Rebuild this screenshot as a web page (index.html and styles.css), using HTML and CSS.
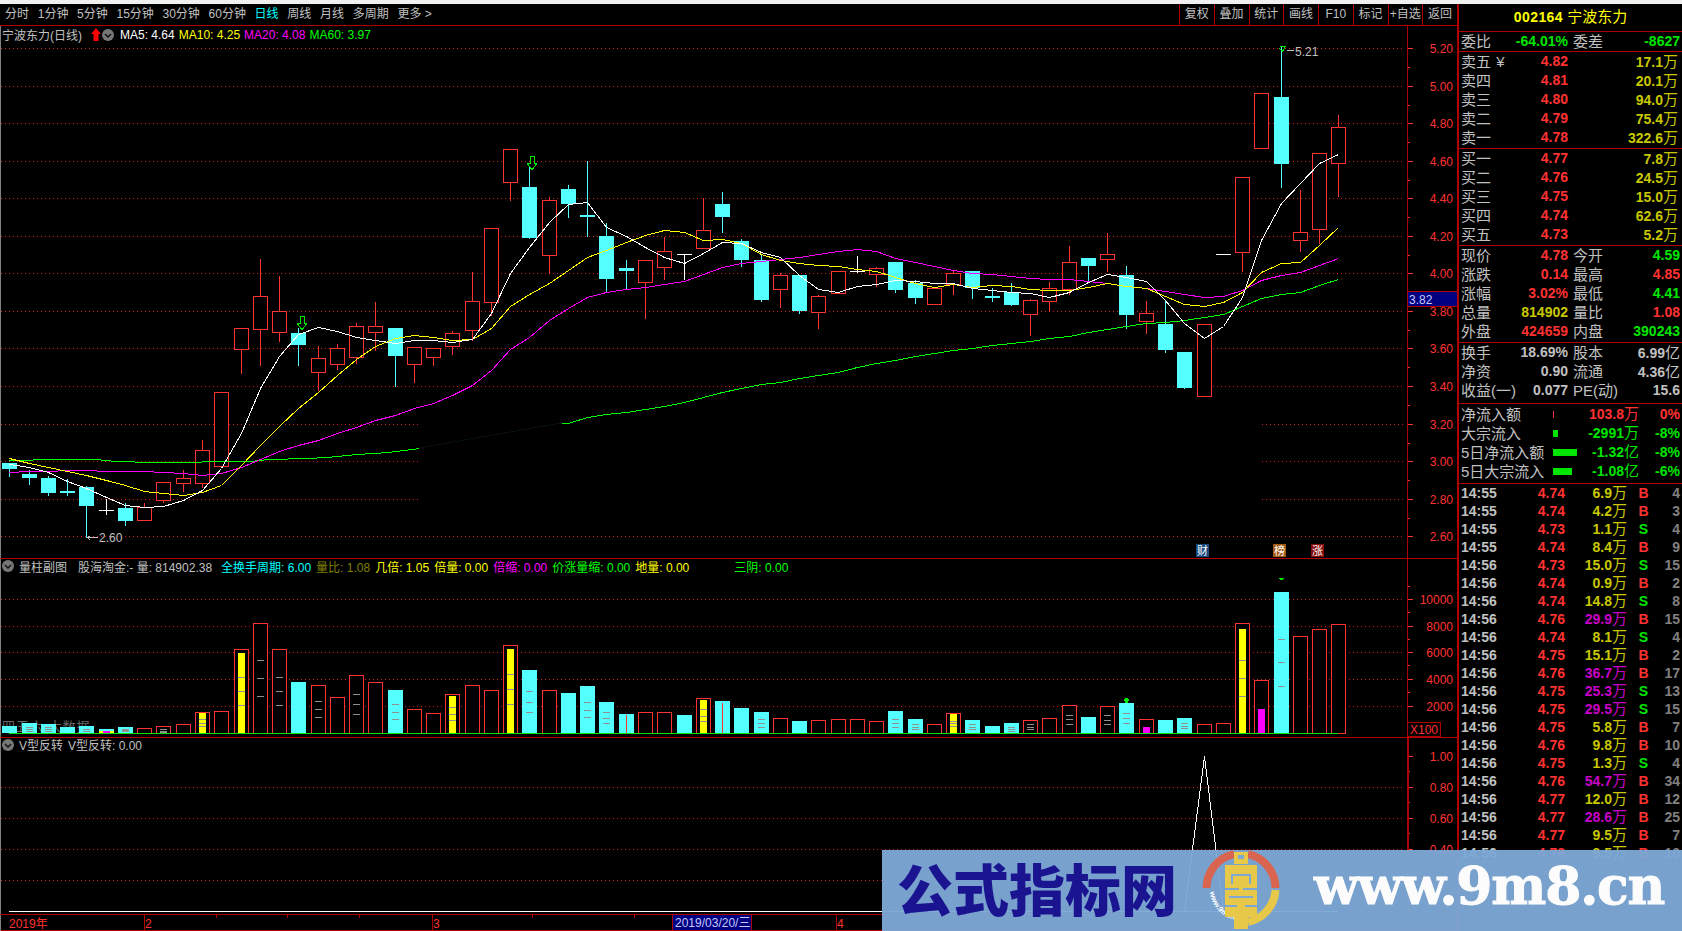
FILE: index.html
```html
<!DOCTYPE html>
<html lang="zh-CN">
<head>
    <meta charset="UTF-8">
    <title>宁波东力(日线)</title>
    <link rel="stylesheet" href="styles.css">
</head>
<body>

<div class="top-strip"></div>

<div class="app">
    <div class="charts">
        <svg id="chart" class="chart-svg" viewBox="0 4 1457 927" width="1457" height="927"></svg>

        <div class="toolbar">
            <div class="tabs">
                <span>分时</span><span>1分钟</span><span>5分钟</span><span>15分钟</span><span>30分钟</span><span>60分钟</span>
                <span class="active">日线</span><span>周线</span><span>月线</span><span>多周期</span><span class="more">更多 &gt;</span>
            </div>
            <div class="tools">
                <span>复权</span><span>叠加</span><span>统计</span><span>画线</span><span>F10</span><span>标记</span><span>+自选</span><span>返回</span>
            </div>
        </div>

        <div class="panel panel-main">
            <div class="legend">
                <span class="name">宁波东力(日线)</span>
                <svg class="up-arrow" viewBox="0 0 10 13" width="10" height="13"><path d="M5 0L10 6H7.5V13H2.5V6H0Z" fill="#ff0000"/></svg>
                <svg class="fold" viewBox="0 0 12 12" width="12" height="12"><circle cx="6" cy="6" r="6" fill="#777"/><path d="M3 5L6 8L9 5" fill="none" stroke="#111" stroke-width="1.5"/></svg>
                <span class="ma white">MA5: 4.64</span>
                <span class="ma yellow">MA10: 4.25</span>
                <span class="ma magenta">MA20: 4.08</span>
                <span class="ma green">MA60: 3.97</span>
            </div>
        </div>

        <div class="panel panel-vol">
            <div class="legend">
                <svg class="fold" viewBox="0 0 12 12" width="12" height="12"><circle cx="6" cy="6" r="6" fill="#777"/><path d="M3 5L6 8L9 5" fill="none" stroke="#111" stroke-width="1.5"/></svg>
                <span class="name">量柱副图</span>
                <span class="name far">股海淘金:- 量: 814902.38</span>
                <span class="cyan turn">全换手周期: 6.00</span>
                <span class="olive">量比: 1.08</span>
                <span class="yellow">几倍: 1.05</span>
                <span class="yellow">倍量: 0.00</span>
                <span class="magenta">倍缩: 0.00</span>
                <span class="green">价涨量缩: 0.00</span>
                <span class="yellow">地量: 0.00</span>
                <span class="green san-yin">三阴: 0.00</span>
            </div>
        </div>

        <div class="panel panel-v">
            <div class="legend">
                <svg class="fold" viewBox="0 0 12 12" width="12" height="12"><circle cx="6" cy="6" r="6" fill="#777"/><path d="M3 5L6 8L9 5" fill="none" stroke="#111" stroke-width="1.5"/></svg>
                <span class="name">V型反转</span>
                <span class="name">V型反转: 0.00</span>
            </div>
        </div>

        <div class="date-axis"></div>
    </div>

    <aside class="quote">
        <div class="q-head"><b>002164</b> 宁波东力</div>

        <div class="q-sec q-ratio">
            <div class="row"><span>委比</span><b class="green">-64.01%</b><span>委差</span><b class="green">-8627</b></div>
        </div>

        <div class="q-sec q-five">
            <div class="row"><span class="nowrap">卖五 <em>¥</em></span><b class="red">4.82</b><b class="vol olive">17.1<i>万</i></b></div>
            <div class="row"><span>卖四</span><b class="red">4.81</b><b class="vol olive">20.1<i>万</i></b></div>
            <div class="row"><span>卖三</span><b class="red">4.80</b><b class="vol olive">94.0<i>万</i></b></div>
            <div class="row"><span>卖二</span><b class="red">4.79</b><b class="vol olive">75.4<i>万</i></b></div>
            <div class="row"><span>卖一</span><b class="red">4.78</b><b class="vol olive">322.6<i>万</i></b></div>
        </div>

        <div class="q-sec q-five">
            <div class="row"><span>买一</span><b class="red">4.77</b><b class="vol olive">7.8<i>万</i></b></div>
            <div class="row"><span>买二</span><b class="red">4.76</b><b class="vol olive">24.5<i>万</i></b></div>
            <div class="row"><span>买三</span><b class="red">4.75</b><b class="vol olive">15.0<i>万</i></b></div>
            <div class="row"><span>买四</span><b class="red">4.74</b><b class="vol olive">62.6<i>万</i></b></div>
            <div class="row"><span>买五</span><b class="red">4.73</b><b class="vol olive">5.2<i>万</i></b></div>
        </div>

        <div class="q-sec q-five">
            <div class="row"><span>现价</span><b class="red">4.78</b><span>今开</span><b class="green">4.59</b></div>
            <div class="row"><span>涨跌</span><b class="red">0.14</b><span>最高</span><b class="red">4.85</b></div>
            <div class="row"><span>涨幅</span><b class="red">3.02%</b><span>最低</span><b class="green">4.41</b></div>
            <div class="row"><span>总量</span><b class="olive">814902</b><span>量比</span><b class="red">1.08</b></div>
            <div class="row"><span>外盘</span><b class="red">424659</b><span>内盘</span><b class="green">390243</b></div>
        </div>

        <div class="q-sec q-base">
            <div class="row"><span>换手</span><b>18.69%</b><span>股本</span><b>6.99<i>亿</i></b></div>
            <div class="row"><span>净资</span><b>0.90</b><span>流通</span><b>4.36<i>亿</i></b></div>
            <div class="row"><span class="nowrap">收益(一)</span><b>0.077</b><span class="nowrap">PE(动)</span><b>15.6</b></div>
        </div>

        <div class="q-sec q-flow">
            <div class="flow"><span>净流入额</span><s class="bar bar-red" style="width:1px"></s><b class="red">103.8<i>万</i></b><b class="red">0%</b></div>
            <div class="flow"><span>大宗流入</span><s class="bar" style="width:5px"></s><b class="green">-2991<i>万</i></b><b class="green">-8%</b></div>
            <div class="flow"><span>5日净流入额</span><s class="bar" style="width:24px"></s><b class="green">-1.32<i>亿</i></b><b class="green">-8%</b></div>
            <div class="flow"><span>5日大宗流入</span><s class="bar" style="width:19px"></s><b class="green">-1.08<i>亿</i></b><b class="green">-6%</b></div>
        </div>

        <div class="ticks">
            <div class="tick"><b>14:55</b><b class="red">4.74</b><b class="olive">6.9<i>万</i></b><b class="red">B</b><b class="gray">4</b></div>
            <div class="tick"><b>14:55</b><b class="red">4.74</b><b class="olive">4.2<i>万</i></b><b class="red">B</b><b class="gray">3</b></div>
            <div class="tick"><b>14:55</b><b class="red">4.73</b><b class="olive">1.1<i>万</i></b><b class="green">S</b><b class="gray">4</b></div>
            <div class="tick"><b>14:55</b><b class="red">4.74</b><b class="olive">8.4<i>万</i></b><b class="red">B</b><b class="gray">9</b></div>
            <div class="tick"><b>14:56</b><b class="red">4.73</b><b class="olive">15.0<i>万</i></b><b class="green">S</b><b class="gray">15</b></div>
            <div class="tick"><b>14:56</b><b class="red">4.74</b><b class="olive">0.9<i>万</i></b><b class="red">B</b><b class="gray">2</b></div>
            <div class="tick"><b>14:56</b><b class="red">4.74</b><b class="olive">14.8<i>万</i></b><b class="green">S</b><b class="gray">8</b></div>
            <div class="tick"><b>14:56</b><b class="red">4.76</b><b class="purple">29.9<i>万</i></b><b class="red">B</b><b class="gray">15</b></div>
            <div class="tick"><b>14:56</b><b class="red">4.74</b><b class="olive">8.1<i>万</i></b><b class="green">S</b><b class="gray">4</b></div>
            <div class="tick"><b>14:56</b><b class="red">4.75</b><b class="olive">15.1<i>万</i></b><b class="red">B</b><b class="gray">2</b></div>
            <div class="tick"><b>14:56</b><b class="red">4.76</b><b class="purple">36.7<i>万</i></b><b class="red">B</b><b class="gray">17</b></div>
            <div class="tick"><b>14:56</b><b class="red">4.75</b><b class="purple">25.3<i>万</i></b><b class="green">S</b><b class="gray">13</b></div>
            <div class="tick"><b>14:56</b><b class="red">4.75</b><b class="purple">29.5<i>万</i></b><b class="green">S</b><b class="gray">15</b></div>
            <div class="tick"><b>14:56</b><b class="red">4.75</b><b class="olive">5.8<i>万</i></b><b class="red">B</b><b class="gray">7</b></div>
            <div class="tick"><b>14:56</b><b class="red">4.76</b><b class="olive">9.8<i>万</i></b><b class="red">B</b><b class="gray">10</b></div>
            <div class="tick"><b>14:56</b><b class="red">4.75</b><b class="olive">1.3<i>万</i></b><b class="green">S</b><b class="gray">4</b></div>
            <div class="tick"><b>14:56</b><b class="red">4.76</b><b class="purple">54.7<i>万</i></b><b class="red">B</b><b class="gray">34</b></div>
            <div class="tick"><b>14:56</b><b class="red">4.77</b><b class="olive">12.0<i>万</i></b><b class="red">B</b><b class="gray">12</b></div>
            <div class="tick"><b>14:56</b><b class="red">4.77</b><b class="purple">28.6<i>万</i></b><b class="red">B</b><b class="gray">25</b></div>
            <div class="tick"><b>14:56</b><b class="red">4.77</b><b class="olive">9.5<i>万</i></b><b class="red">B</b><b class="gray">7</b></div>
            <div class="tick"><b>14:56</b><b class="red">4.78</b><b class="olive">9.5<i>万</i></b><b class="red">B</b><b class="gray">10</b></div>
        </div>
    </aside>
</div>

<!-- 水印横幅 -->
<div class="banner">
    <div class="banner-title">公式指标网</div>
    <svg class="banner-logo" viewBox="0 0 84 81" width="84" height="81">
        <path d="M5.5 38A34.5 34.5 0 0 1 33 4.2" fill="none" stroke="#d9644f" stroke-width="8"/>
        <path d="M47 4.2A34.5 34.5 0 0 1 74.5 38" fill="none" stroke="#d9644f" stroke-width="8"/>
        <path d="M74.5 40A34.5 34.5 0 0 1 47 71.8" fill="none" stroke="#e8c848" stroke-width="8"/>
        <path id="logo-arc" d="M9 42A31.5 31.5 0 0 0 36 70" fill="none"/>
        <text class="logo-text"><textPath href="#logo-arc">www.9m8.cn</textPath></text>
        <rect x="33" y="2" width="14" height="12" fill="#e8c848"/>
        <rect x="37" y="5" width="6" height="4" fill="#7da8d6"/>
        <rect x="24" y="15" width="32" height="52" fill="#e8c848"/>
        <rect x="33" y="67" width="14" height="12" fill="#e8c848"/>
        <rect x="30" y="24" width="20" height="2" fill="#7da8d6"/>
        <rect x="30" y="24" width="2" height="10" fill="#7da8d6"/>
        <rect x="48" y="24" width="2" height="10" fill="#7da8d6"/>
        <rect x="24" y="38" width="14" height="2" fill="#7da8d6"/>
        <rect x="42" y="38" width="14" height="2" fill="#7da8d6"/>
        <rect x="28" y="46" width="24" height="2" fill="#7da8d6"/>
        <rect x="24" y="55" width="12" height="2" fill="#7da8d6"/>
        <rect x="44" y="55" width="12" height="2" fill="#7da8d6"/>
    </svg>
    <div class="banner-url">www.9m8.cn</div>
</div>

<script src="chart.js"></script>
</body>
</html>
```

FILE: styles.css
```css
* {
    box-sizing: border-box;
}

html, body {
    margin: 0;
    height: 931px;
    overflow: hidden;
}

body {
    position: relative;
    background-color: #000;
    color: #c0c0c0;
    font-family: "Liberation Sans", "Noto Sans CJK SC", sans-serif;
    font-size: 12px;
}

.top-strip {
    height: 4px;
    background-color: #f0f0f0;
}

.app {
    display: flex;
    height: 927px;
}

/* 左边K线区 */
.charts {
    position: relative;
    width: 1459px;
    flex: none;
    border-right: 2px solid #b00000;
}

.chart-svg {
    position: absolute;
    top: 0;
    left: 0;
    shape-rendering: crispEdges;
}

.chart-svg text {
    font-family: "Liberation Sans", "Noto Sans CJK SC", sans-serif;
    font-size: 12px;
    fill: #ff3232;
}

.chart-svg text.price-note {
    fill: #c0c0c0;
}

.chart-svg text.mark {
    fill: #fff;
    font-size: 11px;
}

.chart-svg text.ghost {
    fill: #666;
    font-size: 13px;
    letter-spacing: 1px;
}

.chart-svg text.now {
    fill: #c8c8ff;
}

.toolbar {
    position: relative;
    display: flex;
    justify-content: space-between;
    height: 22px;
    line-height: 21px;
    border-bottom: 1px solid #b00000;
}

.tabs {
    display: flex;
    gap: 8.7px;
    padding-left: 5px;
}

.tabs .active {
    color: #00ffff;
}

.tabs .more {
    white-space: nowrap;
}

.tools {
    display: flex;
}

.tools span {
    width: 34.75px;
    text-align: center;
    border-left: 1px solid #b00000;
}

.panel {
    position: relative;
    border-bottom: 1px solid #b00000;
}

.panel-main {
    height: 533px;
}

.panel-vol {
    height: 179px;
}

.panel-v {
    height: 177px;
}

.date-axis {
    height: 16px;
    border-bottom: 1px solid #b00000;
}

.legend {
    position: relative;
    display: flex;
    align-items: center;
    gap: 5px;
    white-space: nowrap;
    padding-left: 2px;
}

.panel-main .legend {
    height: 17px;
    gap: 0;
}

.panel-vol .legend {
    height: 14px;
}

.panel-v .legend {
    height: 13px;
}

.panel-main .up-arrow {
    margin-left: 9px;
}

.panel-main .fold {
    margin-left: 1px;
    margin-right: 6px;
}

.panel-main .ma {
    margin-right: 4px;
}

.name {
    color: #c0c0c0;
}

.name.far {
    margin-left: 6px;
}

.turn {
    margin-left: 4px;
}

.san-yin {
    margin-left: 40px;
}

.white { color: #fff; }
.yellow { color: #ffff00; }
.magenta { color: #ff00ff; }
.green { color: #00e600; }
.cyan { color: #00ffff; }
.red { color: #ff3232; }
.olive { color: #c8c800; }
.gray { color: #808080; }
.purple { color: #c800c8; }

.legend .olive {
    color: #808000;
}

.legend .green {
    color: #00ff00;
}

/* 右边报价区 */
.quote {
    flex: 1;
    overflow: hidden;
    font-size: 15px;
}

.quote b {
    font-size: 14px;
    text-align: right;
}

.quote i {
    font-style: normal;
    font-weight: 400;
    font-size: 15px;
}

.q-head {
    height: 28px;
    line-height: 25px;
    text-align: center;
    color: #ffff00;
    border-bottom: 1px solid #b00000;
}

.q-head b {
    letter-spacing: 0.4px;
}

.q-sec {
    padding: 0 2px;
    border-bottom: 1px solid #b00000;
}

.q-ratio {
    height: 20px;
}

.q-five {
    height: 97px;
}

.q-base {
    height: 61px;
}

.q-flow {
    height: 80px;
}

.row {
    display: grid;
    grid-template-columns: 32px 75px 37px 75px;
    height: 19px;
    line-height: 19px;
}

.row span:nth-child(3) {
    padding-left: 5px;
}

.row .vol {
    grid-column: 3 / 5;
    padding-right: 2px;
}

.nowrap {
    white-space: nowrap;
}

.nowrap em {
    font-style: normal;
    color: #c0c0c0;
    margin-left: 1px;
}

.flow {
    display: grid;
    grid-template-columns: 92px 32px 54px 41px;
    align-items: center;
    height: 19px;
    line-height: 19px;
    white-space: nowrap;
}

.bar {
    display: block;
    height: 7px;
    background-color: #00e600;
}

.bar-red {
    background-color: #ff3232;
}

.ticks {
    padding: 0 2px;
}

.tick {
    display: grid;
    grid-template-columns: 40px 64px 62px 23px 30px;
    height: 18px;
    line-height: 18px;
}

.tick b:first-child {
    text-align: left;
    white-space: nowrap;
}

.tick b:nth-child(4) {
    text-align: center;
    padding-left: 10px;
}

/* 水印 */
.banner {
    position: absolute;
    left: 882px;
    top: 850px;
    width: 800px;
    height: 81px;
    display: flex;
    background-color: rgba(125, 168, 214, 0.96);
}

.banner-title {
    flex: none;
    width: 319px;
    padding-left: 15px;
    font-family: "Noto Sans CJK SC", sans-serif;
    font-size: 56px;
    font-weight: 900;
    line-height: 74px;
    color: #1a1490;
    white-space: nowrap;
}

.banner-logo {
    flex: none;
}

.logo-text {
    font-family: "Liberation Sans", sans-serif;
    font-size: 7.5px;
    font-weight: 700;
    fill: #fff;
}

.banner-url {
    flex: none;
    margin-left: 29px;
    font-family: "DejaVu Serif", serif;
    font-size: 52px;
    font-weight: 700;
    letter-spacing: -1.2px;
    line-height: 72px;
    color: #fcfcfc;
    -webkit-text-stroke: 1px #fcfcfc;
    white-space: nowrap;
}
```

FILE: chart.js
```javascript
// 坐标都是页面像素，svg 的 viewBox 和页面对齐
const RED = '#ff3232', CYAN = '#54ffff', LINE = '#b00000', DOT = '#d81818';
const LEFT = 1403, AXIS = 1407, END = 1457;

// [最高, 实体上, 实体下, 最低, 类型]  r 阳 c 阴 w 十字
const candles = [
    [463,463,469,476,'c'],[470,474,478,484,'c'],[476,478,493,495,'c'],[479,491,493,495,'c'],[486,487,506,537,'c'],
    [499,510,510,514,'w'],[503,508,521,525,'c'],[503,507,520,520,'r'],[482,482,500,502,'r'],[470,478,483,491,'r'],
    [440,450,483,487,'r'],[392,392,466,466,'r'],[328,328,349,373,'r'],[259,296,329,365,'r'],[276,311,332,341,'r'],
    [328,333,345,365,'c'],[346,358,372,390,'r'],[344,348,364,369,'r'],[323,326,357,363,'r'],[302,326,332,350,'r'],
    [328,328,356,386,'c'],[347,347,364,382,'r'],[348,348,357,365,'r'],[331,333,346,354,'r'],[272,301,330,340,'r'],
    [228,228,302,315,'r'],[149,149,182,200,'r'],[167,187,238,238,'c'],[197,200,255,273,'r'],[185,189,204,217,'c'],
    [161,215,217,236,'c'],[223,236,279,292,'c'],[260,268,271,289,'c'],[260,260,282,318,'r'],[237,251,267,279,'r'],
    [254,254,254,279,'w'],[198,230,248,248,'r'],[192,204,217,232,'c'],[239,241,260,266,'c'],[254,260,300,301,'c'],
    [273,275,289,307,'r'],[275,275,311,313,'c'],[295,296,312,328,'r'],[271,271,293,293,'r'],[256,271,271,272,'w'],
    [267,268,274,286,'r'],[262,262,290,292,'c'],[280,283,298,303,'c'],[287,288,304,304,'r'],[271,273,284,294,'r'],
    [271,271,288,298,'c'],[288,296,298,301,'c'],[283,292,305,305,'c'],[299,300,314,335,'r'],[282,288,301,311,'r'],
    [246,262,289,294,'r'],[258,258,266,282,'c'],[233,254,259,271,'r'],[266,275,315,328,'c'],[301,313,321,333,'r'],
    [300,324,350,352,'c'],[352,352,388,388,'c'],[324,324,396,396,'r'],[254,254,254,254,'w'],[177,177,252,271,'r'],
    [93,93,148,148,'r'],[47,97,164,187,'c'],[190,232,240,251,'r'],[153,153,229,243,'r'],[115,127,163,196,'r']
];

const ma5 = [464,467,472,481,488,497,505,507,506,500,490,468,433,388,356,334,327,331,337,340,343,340,340,342,339,313,273,247,222,204,202,227,236,247,257,263,253,242,243,252,257,275,289,292,286,284,280,281,283,283,288,290,292,293,297,292,282,274,277,281,300,323,338,326,297,240,203,183,163,154];
const ma10 = [458,463,467,471,475,480,485,491,493,495,492,485,465,445,426,408,392,375,359,346,338,335,337,340,339,328,306,294,283,270,257,250,242,235,230,232,240,239,243,254,260,263,265,266,269,271,277,283,287,284,287,285,286,289,290,290,287,283,286,288,296,304,306,302,292,272,263,262,245,227];
const ma20 = [472,471,471,470,470,471,471,471,472,473,475,473,467,459,451,445,440,433,427,420,415,408,403,395,385,370,349,337,320,308,297,292,289,287,284,281,274,267,263,261,259,257,254,251,249,251,258,262,266,270,273,274,276,278,279,279,281,283,286,288,291,294,297,296,290,280,275,272,265,258];
const ma60a = [[9,460],[57,459],[96,459],[115,461],[154,462],[250,461],[268,459],[308,458],[326,457],[357,454],[388,452],[419,448]];
const ma60b = [423,417,414,412,409,406,402,397,392,388,384,382,378,375,372,367,363,360,356,353,350,348,345,343,341,338,336,332,329,326,323,322,320,317,314,306,298,294,292,285,279];

const volTops = [726,723,724,727,726,729,727,728,726,724,712,711,649,623,649,682,685,697,675,682,690,709,713,694,685,690,645,670,690,693,686,702,714,712,712,715,698,701,708,712,718,721,720,719,719,721,711,719,724,713,720,726,723,720,718,705,717,706,703,719,720,718,724,723,623,680,592,636,629,624];
const volRed = new Set([7,8,9,10,11,12,13,14,16,17,18,19,21,22,23,24,25,26,28,33,34,36,40,42,43,44,45,48,49,53,54,55,57,59,62,63,64,65,67,68,69]);
const volInner = {5:[731,'#ff00ff'],10:[713,'#ffff00'],12:[653,'#ffff00'],23:[696,'#ffff00'],26:[649,'#ffff00'],36:[700,'#ffff00'],49:[714,'#ffff00'],64:[629,'#ffff00'],59:[727,'#ff00ff'],65:[709,'#ff00ff']};
const volTicks = {1:[727,729,731],2:[727,729,731],4:[729,731],6:[729,730,731],8:[729,731,732],10:[719,723,726],12:[677,691,705],13:[660,678,696],14:[677,691,705],16:[701,709,717],18:[694,704,714],20:[704,712,719],23:[707,714,720],26:[674,689,704],27:[691,702,712],30:[702,710,717],31:[712,718,723],36:[709,716,721],39:[719,723,727],46:[719,723,727],47:[724,727,729],49:[721,723,726],50:[724,727,729],52:[727,729,731],53:[724,727,729],55:[715,719,724],57:[715,720,724],58:[713,718,723],61:[723,726,728],64:[660,678,696],66:[639,662,686]};

let out = '';

function x(i) {
    return Math.round(9.4 + 19.26 * i);
}
function line(x1, y1, x2, y2, color) {
    out += `<line x1="${x1}" y1="${y1}" x2="${x2}" y2="${y2}" stroke="${color}"/>`;
}
function box(x1, y1, w, h, fill, stroke) {
    out += `<rect x="${x1}" y="${y1}" width="${w}" height="${h}" fill="${fill}" stroke="${stroke || 'none'}"/>`;
}
function text(x1, y1, str, cls, anchor) {
    out += `<text x="${x1}" y="${y1}" class="${cls || ''}" text-anchor="${anchor || 'start'}">${str}</text>`;
}
// 折线落在像素中间，不然水平段会断
function poly(points, color) {
    const pts = points.map(p => (p[0] + 0.5) + ',' + (p[1] + 0.5)).join(' ');
    out += `<polyline points="${pts}" fill="none" stroke="${color}"/>`;
}
function dots(x1, x2, y) {
    out += `<line x1="${x1}" y1="${y + 0.5}" x2="${x2}" y2="${y + 0.5}" stroke="${DOT}" stroke-dasharray="1 3"/>`;
}
function axisLabels(list) {
    list.forEach(([label, y]) => {
        text(1453, y + 5, label, '', 'end');
        line(AXIS, y + 0.5, AXIS + 6, y + 0.5, RED);
    });
}
function downArrow(cx, y, color) {
    out += `<path d="M${cx - 2} ${y}H${cx + 2}V${y + 7}H${cx + 5}L${cx} ${y + 14}L${cx - 5} ${y + 7}H${cx - 2}Z" fill="none" stroke="${color}"/>`;
}

// 左边灰线
line(0.5, 26, 0.5, 931, '#808080');

// 主图网格
const priceLabels = ['5.20','5.00','4.80','4.60','4.40','4.20','4.00','3.80','3.60','3.40','3.20','3.00','2.80','2.60'];
priceLabels.forEach((label, k) => {
    const y = Math.round(48 + 37.55 * k);
    if (k >= 10 && k <= 12) {
        dots(1, 420, y);
        dots(1262, LEFT, y);
    } else {
        dots(1, LEFT, y);
    }
    text(1453, y + 5, label, '', 'end');
    line(AXIS, y + 0.5, AXIS + 6, y + 0.5, RED);
    if (k < 13) {
        line(AXIS, y + 19, AXIS + 3, y + 19, RED);
    }
});

// 现价框
box(1407.5, 291.5, 50, 15, '#000080', LINE);
text(1409, 304, '3.82', 'now');

// K线
candles.forEach((c, i) => {
    const cx = x(i) + 0.5;
    const color = c[4] === 'r' ? RED : c[4] === 'c' ? CYAN : '#fff';
    line(cx, c[0], cx, c[1], color);
    line(cx, c[2], cx, c[3] + 1, color);
    if (c[4] === 'w') {
        line(cx - 7.5, c[1] + 0.5, cx + 7.5, c[1] + 0.5, color);
    } else if (c[4] === 'c') {
        box(cx - 7.5, c[1], 15, Math.max(c[2] - c[1], 2), CYAN);
    } else {
        box(cx - 7, c[1] + 0.5, 14, c[2] - c[1], '#000', RED);
    }
});

// 均线
poly(ma60a, '#00ff00');
line(419, 448, 561, 423, '#061206');
poly([[561, 423]].concat(ma60b.map((y, k) => [x(k + 29), y])), '#00ff00');
poly(ma20.map((y, k) => [x(k), y]), '#ff00ff');
poly(ma10.map((y, k) => [x(k), y]), '#ffff00');
poly(ma5.map((y, k) => [x(k), y]), '#ffffff');

// 标记
downArrow(302, 316, '#00e600');
downArrow(532, 156, '#00e600');
line(87, 537.5, 98, 537.5, '#c0c0c0');
poly([[90, 535], [87, 537], [90, 540]], '#c0c0c0');
text(99, 542, '2.60', 'price-note');
line(1287, 50.5, 1294, 50.5, '#c0c0c0');
poly([[1279, 46], [1285, 46], [1282, 51], [1279, 48]], '#00e600');
text(1295, 56, '5.21', 'price-note');

[[1196, '财', '#184a80'], [1273, '榜', '#a05a14'], [1311, '涨', '#860c0c']].forEach(([mx, str, color]) => {
    box(mx, 544, 13, 13, color);
    text(mx + 1, 555, str, 'mark');
});

// 量柱网格
[599, 626, 652, 679, 706].forEach(y => dots(1, LEFT, y));
axisLabels([['10000', 599], ['8000', 626], ['6000', 652], ['4000', 679], ['2000', 706]]);
[586, 612, 639, 665, 692].forEach(y => line(AXIS, y + 0.5, AXIS + 3, y + 0.5, RED));
out += '<rect x="1407.5" y="722.5" width="33" height="14" fill="none" stroke="#b00000"/>';
text(1410, 734, 'X100', '');
text(2, 731, '四五六 大数据', 'ghost');

// 量柱
volTops.forEach((top, i) => {
    const cx = x(i);
    if (volRed.has(i)) {
        box(cx - 7 + 0.5, top + 0.5, 14, 733 - top, '#000', RED);
    } else {
        box(cx - 7, top, 15, 733 - top, CYAN);
    }
    if (volInner[i]) {
        if (i === 5) {
            box(cx - 7, 731, 15, 3, '#ffff00');
            box(cx - 3, 731, 7, 3, '#ff00ff');
        } else {
            box(cx - 3, volInner[i][0], 7, 733 - volInner[i][0], volInner[i][1]);
        }
    }
    (volTicks[i] || []).forEach(y => line(cx - 3, y + 0.5, cx + 4, y + 0.5, '#909090'));
});
line(x(32) + 0.5, 715, x(32) + 0.5, 733, RED);
line(x(37) + 0.5, 703, x(37) + 0.5, 733, RED);
box(x(58) - 1, 698, 3, 5, '#00e600');
box(x(58) - 2, 699, 5, 2, '#00e600');
box(x(66) - 2, 578, 5, 1, '#00e600');
box(x(66) - 1, 579, 3, 1, '#00e600');
line(9, 733.5, 1338, 733.5, '#00e600');

// V型反转
[787, 818, 849, 880].forEach(y => dots(1, LEFT, y));
axisLabels([['1.00', 756], ['0.80', 787], ['0.60', 818], ['0.40', 849], ['0.20', 880]]);
[771, 802, 833, 864, 895].forEach(y => line(AXIS, y + 0.5, AXIS + 3, y + 0.5, RED));
poly([[x(61), 911], [x(62), 756], [x(63), 911]], '#fff');
line(9, 911.5, 1338, 911.5, '#fff');

// 坐标轴竖线
line(AXIS + 0.5, 26, AXIS + 0.5, 914, LINE);
line(AXIS + 1.5, 738, AXIS + 1.5, 914, LINE);

// 日期轴
[144, 432, 672, 751, 836].forEach(tx => line(tx + 0.5, 915, tx + 0.5, 930, LINE));
[216, 287, 359, 532, 634].forEach(tx => line(tx + 0.5, 915, tx + 0.5, 918, LINE));
text(9, 928, '2019年', '');
text(145, 928, '2', '');
text(433, 928, '3', '');
text(837, 928, '4', '');
box(673, 915, 78, 15, '#000080');
text(675, 927, '2019/03/20/三', 'now');

document.getElementById('chart').innerHTML = out;
```
